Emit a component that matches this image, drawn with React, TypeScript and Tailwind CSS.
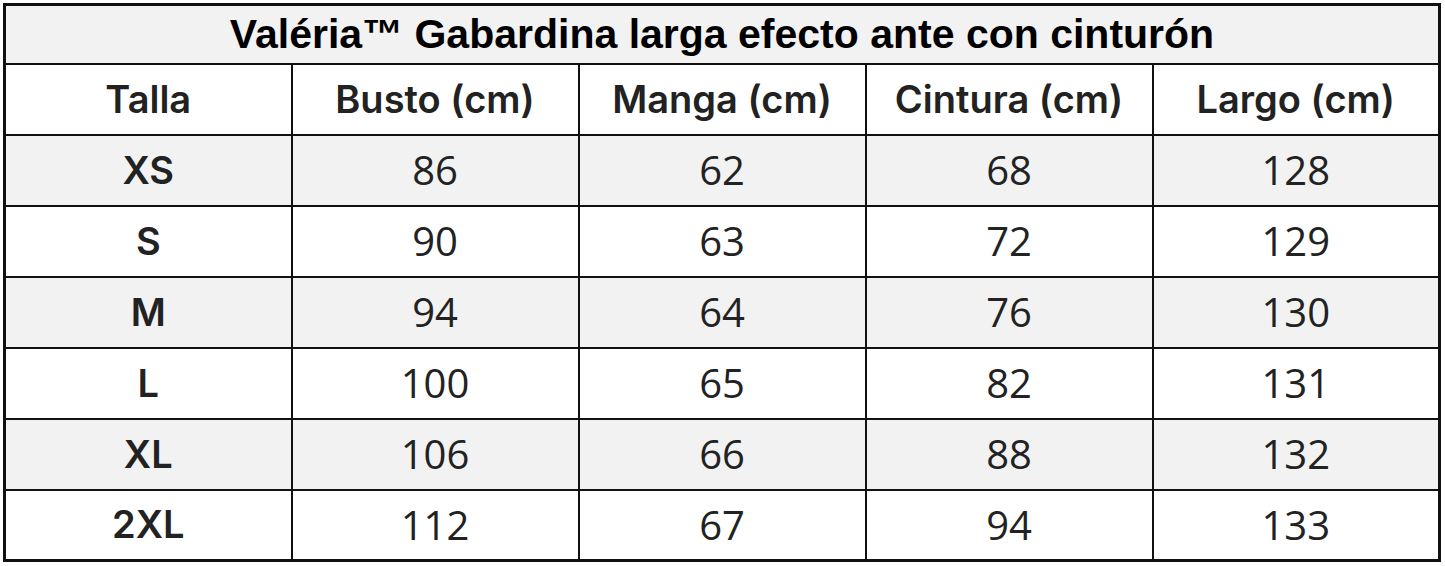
import React from "react"

type Row = {
  size: string
  values: number[]
}

const headers = ["Talla", "Busto (cm)", "Manga (cm)", "Cintura (cm)", "Largo (cm)"]

const rows: Row[] = [
  { size: "XS", values: [86, 62, 68, 128] },
  { size: "S", values: [90, 63, 72, 129] },
  { size: "M", values: [94, 64, 76, 130] },
  { size: "L", values: [100, 65, 82, 131] },
  { size: "XL", values: [106, 66, 88, 132] },
  { size: "2XL", values: [112, 67, 94, 133] },
]

const App: React.FC = () => {
  return (
    <div className="w-[1445px] h-[566px] bg-white pt-[3px] pl-[3px]">
      <table className="w-[1438px] table-fixed border-collapse border-[3px] border-[#111] text-[#222] font-['Inter','Lato',sans-serif]">
        <thead>
          <tr className="h-[59px] bg-[#f2f2f2]">
            <th
              colSpan={5}
              className="border-[2.5px] border-[#111] text-center text-[41px] font-bold text-black font-['Liberation_Sans',Arial,sans-serif] leading-none"
            >
              Valéria™ Gabardina larga efecto ante con cinturón
            </th>
          </tr>
          <tr className="h-[71px] bg-white">
            {headers.map((h) => (
              <th key={h} className="border-[2.5px] border-[#111] text-center text-[38px] font-semibold">
                {h}
              </th>
            ))}
          </tr>
        </thead>
        <tbody>
          {rows.map((r, i) => (
            <tr key={r.size} className={`h-[71px] ${i % 2 === 0 ? "bg-[#f2f2f2]" : "bg-white"}`}>
              <td className="border-[2.5px] border-[#111] text-center text-[38px] font-semibold">{r.size}</td>
              {r.values.map((v, j) => (
                <td
                  key={j}
                  className="border-[2.5px] border-[#111] text-center text-[40px] font-normal font-['Open_Sans',sans-serif]"
                >
                  {v}
                </td>
              ))}
            </tr>
          ))}
        </tbody>
      </table>
    </div>
  )
}

export default App
